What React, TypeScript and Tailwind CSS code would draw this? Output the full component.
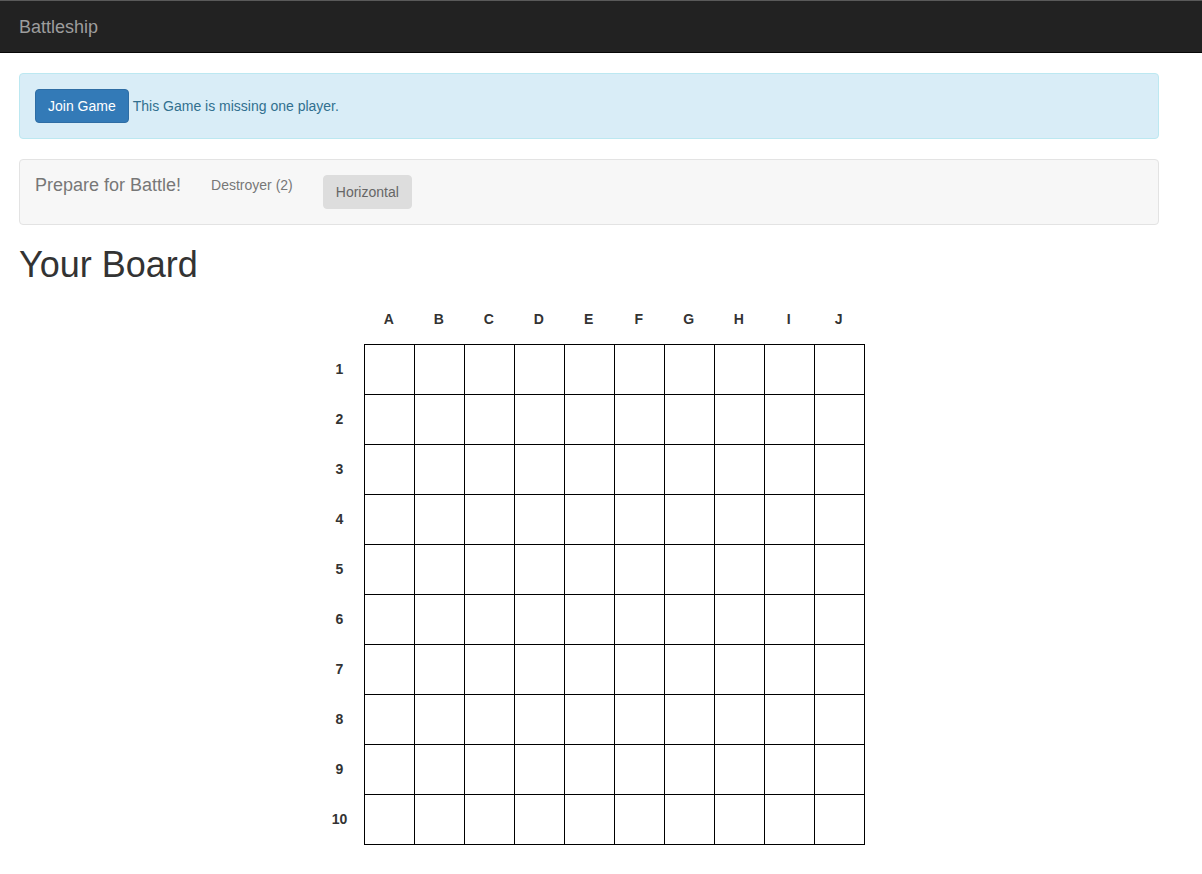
const COLS = ["A", "B", "C", "D", "E", "F", "G", "H", "I", "J"];
const ROWS = [1, 2, 3, 4, 5, 6, 7, 8, 9, 10];

export default function App() {
  return (
    <div className="min-h-screen bg-white text-[14px] text-[#333] font-['Liberation_Sans',Arial,sans-serif]">
      {/* Navbar */}
      <nav className="border-t border-t-[#5a5a5a] border-b border-b-[#080808] bg-[#222] h-[53px]">
        <div className="px-[19px] pt-[2px] h-[51px] flex items-center">
          <span className="text-[18px] text-[#9d9d9d]">Battleship</span>
        </div>
      </nav>

      <div className="ml-[19px] w-[1140px]">
        {/* Alert */}
        <div className="mt-[20px] rounded-[4px] border border-[#bce8f1] bg-[#d9edf7] p-[15px] text-[#31708f] flex items-center">
          <button className="h-[34px] px-[12px] rounded-[4px] border border-[#2e6da4] bg-[#337ab7] text-white">
            Join Game
          </button>
          <span className="ml-[4px]">This Game is missing one player.</span>
        </div>

        {/* Well */}
        <div className="mt-[20px] h-[66px] rounded-[4px] border border-[#e3e3e3] bg-[#f7f7f7] px-[15px] pt-[15px] flex items-start">
          <span className="text-[18px] leading-[20px] text-[#777]">Prepare for Battle!</span>
          <span className="ml-[30px] leading-[20px] text-[#777]">Destroyer (2)</span>
          <button className="ml-[30px] h-[34px] px-[12px] rounded-[4px] border border-[#ddd] bg-[#ddd] text-[#666]">
            Horizontal
          </button>
        </div>

        <h1 className="mt-[20px] text-[36px] leading-[40px] font-normal text-[#333]">Your Board</h1>

        {/* Board */}
        <div className="mt-[9px] flex justify-center pl-[2px]">
          <table className="border-collapse">
            <thead>
              <tr>
                <th className="w-[50px] h-[50px]"></th>
                {COLS.map((c) => (
                  <th key={c} className="w-[50px] h-[50px] pr-[2px] pt-[2px] text-center font-bold text-[#333]">
                    {c}
                  </th>
                ))}
              </tr>
            </thead>
            <tbody>
              {ROWS.map((r) => (
                <tr key={r}>
                  <th className="w-[50px] h-[50px] text-center font-bold text-[#333]">{r}</th>
                  {COLS.map((c) => (
                    <td key={c} className="w-[50px] h-[50px] border border-black p-0"></td>
                  ))}
                </tr>
              ))}
            </tbody>
          </table>
        </div>
      </div>
    </div>
  );
}
